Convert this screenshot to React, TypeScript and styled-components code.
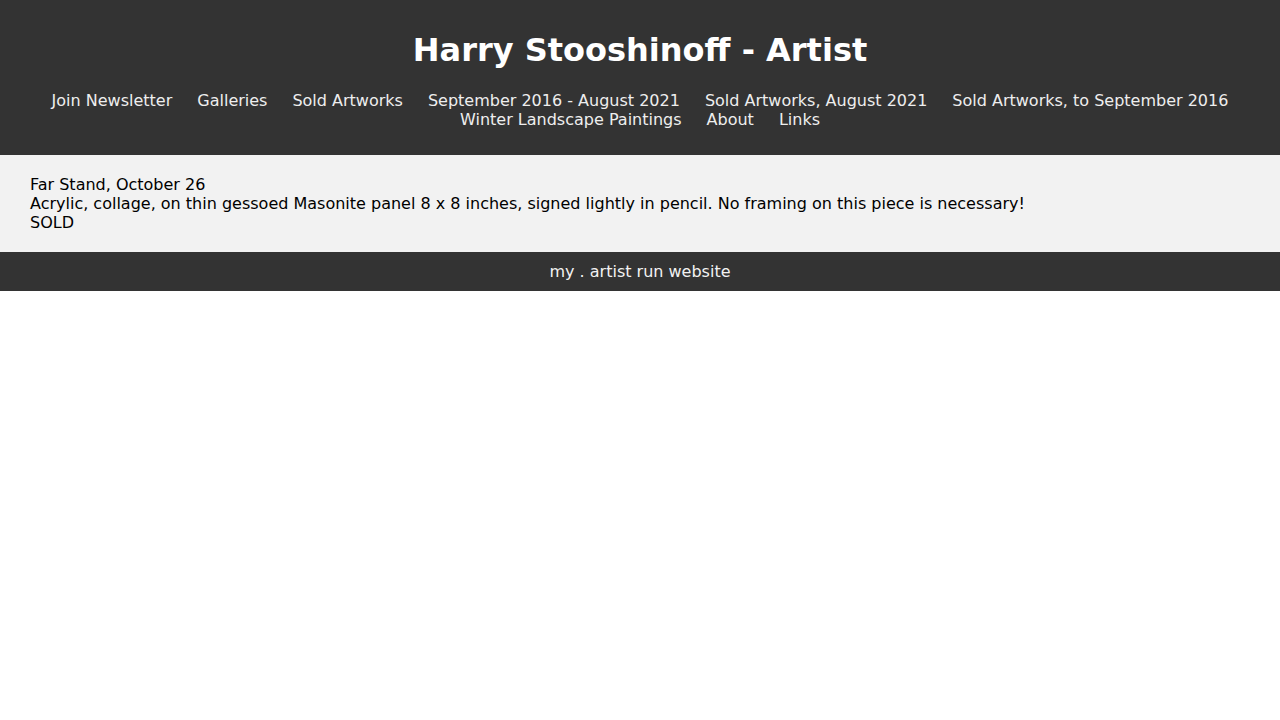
import React from "react";
import styled, { createGlobalStyle } from "styled-components";

const Global = createGlobalStyle`
  html, body { margin: 0; padding: 0; background: #fff; }
  body { font-family: "DejaVu Sans", "Liberation Sans", sans-serif; font-size: 16px; }
`;

const Header = styled.header`
  background: #333333;
  color: #f2f2f2;
  padding: 31px 20px 26px;
  text-align: center;
`;

const Title = styled.h1`
  margin: 0;
  font-size: 32px;
  line-height: 38px;
  font-weight: bold;
  color: #ffffff;
`;

const Nav = styled.nav`
  margin-top: 22px;
  display: flex;
  flex-wrap: wrap;
  justify-content: center;
  column-gap: 25px;
`;

const NavLink = styled.a`
  color: #eeeeee;
  text-decoration: none;
  line-height: 19px;
  white-space: nowrap;
`;

const Main = styled.main`
  background: #f2f2f2;
  color: #000;
  padding: 20px 30px;
`;

const Line = styled.div`
  line-height: 19px;
`;

const Footer = styled.footer`
  background: #333333;
  color: #f2f2f2;
  text-align: center;
  padding: 10px 20px;
  line-height: 19px;
`;

const links = [
  "Join Newsletter",
  "Galleries",
  "Sold Artworks",
  "September 2016 - August 2021",
  "Sold Artworks, August 2021",
  "Sold Artworks, to September 2016",
  "Winter Landscape Paintings",
  "About",
  "Links",
];

export default function App() {
  return (
    <>
      <Global />
      <Header>
        <Title>Harry Stooshinoff - Artist</Title>
        <Nav>
          {links.map((l) => (
            <NavLink key={l} href="#">
              {l}
            </NavLink>
          ))}
        </Nav>
      </Header>
      <Main>
        <Line>Far Stand, October 26</Line>
        <Line>
          Acrylic, collage, on thin gessoed Masonite panel 8 x 8 inches, signed lightly in pencil. No framing on this piece is necessary!
        </Line>
        <Line>SOLD</Line>
      </Main>
      <Footer>my . artist run website</Footer>
    </>
  );
}
